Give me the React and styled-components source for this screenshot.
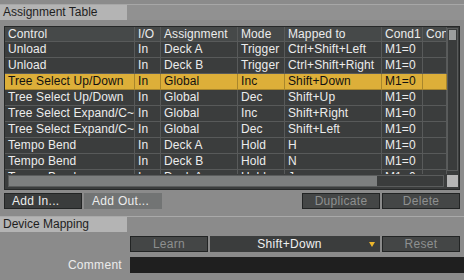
import React from 'react';
import styled, { createGlobalStyle } from 'styled-components';

const rows = [
  ['Unload', 'In', 'Deck A', 'Trigger', 'Ctrl+Shift+Left', 'M1=0', ''],
  ['Unload', 'In', 'Deck B', 'Trigger', 'Ctrl+Shift+Right', 'M1=0', ''],
  ['Tree Select Up/Down', 'In', 'Global', 'Inc', 'Shift+Down', 'M1=0', ''],
  ['Tree Select Up/Down', 'In', 'Global', 'Dec', 'Shift+Up', 'M1=0', ''],
  ['Tree Select Expand/C~', 'In', 'Global', 'Inc', 'Shift+Right', 'M1=0', ''],
  ['Tree Select Expand/C~', 'In', 'Global', 'Dec', 'Shift+Left', 'M1=0', ''],
  ['Tempo Bend', 'In', 'Deck A', 'Hold', 'H', 'M1=0', ''],
  ['Tempo Bend', 'In', 'Deck B', 'Hold', 'N', 'M1=0', ''],
  ['Tempo Bend', 'In', 'Deck A', 'Hold', 'J', 'M1=0', ''],
];

const headers = ['Control', 'I/O', 'Assignment', 'Mode', 'Mapped to', 'Cond1', 'Con'];

const App = () => {
  return (
    <>
      <GlobalStyle />
      <Panel>
        <TopStrip />
        <SectionHead>
          <Tab>Assignment Table</Tab>
          <TabRest />
        </SectionHead>

        <TableFrame>
          <TableBody>
            <Row $head>
              {headers.map((h) => (
                <Cell key={h}>{h}</Cell>
              ))}
            </Row>
            {rows.map((r, i) => (
              <Row key={i} $selected={i === 2}>
                {r.map((c, j) => (
                  <Cell key={j}>{c}</Cell>
                ))}
              </Row>
            ))}
          </TableBody>
          <VScroll>
            <VThumb />
          </VScroll>
          <HScroll>
            <HThumb />
          </HScroll>
          <Corner />
        </TableFrame>

        <ButtonRow>
          <Button $variant="dark" $left>Add In...</Button>
          <Button $variant="light" $left>Add Out...</Button>
          <Spacer />
          <Button>Duplicate</Button>
          <Button>Delete</Button>
        </ButtonRow>

        <Separator />
        <SectionHead>
          <Tab>Device Mapping</Tab>
        </SectionHead>

        <MappingGrid>
          <span />
          <ControlRow>
            <Button>Learn</Button>
            <Dropdown>
              <span>Shift+Down</span>
              <Arrow />
            </Dropdown>
            <Button>Reset</Button>
          </ControlRow>
          <Label>Comment</Label>
          <CommentInput />
        </MappingGrid>
      </Panel>
    </>
  );
};

const GlobalStyle = createGlobalStyle`
  body {
    margin: 0;
    background: #8b8b8b;
  }
`;

const Panel = styled.div`
  width: 464px;
  height: 280px;
  background: #8b8b8b;
  font-family: "Liberation Sans", Arial, sans-serif;
  font-size: 12px;
  overflow: hidden;
`;

const TopStrip = styled.div`
  height: 4px;
  border-bottom: 1px solid #a7a7a7;
`;

const SectionHead = styled.div`
  display: flex;
  height: 15px;
`;

const Tab = styled.div`
  width: 124px;
  padding-left: 3px;
  background: #b4b4b4;
  color: #1e1e1e;
  line-height: 15px;
`;

const TabRest = styled.div`
  flex: 1;
  background: #919191;
`;

const TableFrame = styled.div`
  box-sizing: border-box;
  margin: 6px 4px 0;
  width: 456px;
  height: 164px;
  border: 1px solid #262828;
  background: #3b3d3d;
  display: grid;
  grid-template-columns: 442px 12px;
  grid-template-rows: 147px 15px;
`;

const TableBody = styled.div`
  overflow: hidden;
`;

const Row = styled.div`
  display: grid;
  grid-template-columns: 130px 26px 77px 47px 97px 41px 24px;
  height: ${(p) => (p.$head ? '15px' : '16px')};
  box-sizing: border-box;
  border-bottom: 1px solid ${(p) => (p.$selected ? '#a8862c' : '#585a5a')};
  background: ${(p) => (p.$selected ? '#ddaf39' : p.$head ? '#464949' : '#3b3d3d')};
  color: ${(p) => (p.$selected ? '#111' : '#ececec')};

  & > div {
    border-right-color: ${(p) => (p.$selected ? '#a8862c' : '#585a5a')};
  }
`;

const Cell = styled.div`
  box-sizing: border-box;
  padding-left: 3px;
  border-right: 1px solid #585a5a;
  line-height: 15px;
  white-space: nowrap;
  overflow: hidden;
  letter-spacing: 0.1px;
`;

const VScroll = styled.div`
  box-sizing: border-box;
  margin: 1px 1px 3px 0;
  border: 1px solid #5a5c5c;
  background: #3a3c3c;
  padding: 1px;
`;

const VThumb = styled.div`
  height: 10px;
  background: #9c9e9e;
`;

const HScroll = styled.div`
  box-sizing: border-box;
  margin: 1px 3px 2px 3px;
  border: 1px solid #5a5c5c;
  background: #3a3c3c;
  display: flex;
`;

const HThumb = styled.div`
  width: 368px;
  background: #7d7f7f;
`;

const Corner = styled.div`
  margin: 1px 1px 2px 0;
  background: #b6b6b6;
`;

const ButtonRow = styled.div`
  display: flex;
  gap: 2px;
  padding: 0 4px;
  margin-top: 3px;
  height: 16px;
`;

const Spacer = styled.div`
  flex: 1;
`;

const Button = styled.div`
  box-sizing: border-box;
  width: 78px;
  height: 16px;
  border: 1px solid ${(p) => (p.$variant === 'light' ? '#727474' : '#222424')};
  background: ${(p) =>
    p.$variant === 'light' ? '#727474' : p.$variant === 'dark' ? '#3a3c3c' : '#444646'};
  color: ${(p) => (p.$variant ? '#ececec' : '#8e9090')};
  text-align: ${(p) => (p.$left ? 'left' : 'center')};
  padding-left: ${(p) => (p.$left ? '7px' : '0')};
  line-height: 14px;
  letter-spacing: 0.3px;
`;

const Separator = styled.div`
  margin-top: 7px;
  height: 1px;
  background: #a9a9a9;
`;

const MappingGrid = styled.div`
  display: grid;
  grid-template-columns: 130px 1fr;
  grid-template-rows: 16px 16px;
  row-gap: 5px;
  margin-top: 4px;
`;

const ControlRow = styled.div`
  display: flex;
  gap: 2px;
`;

const Dropdown = styled.div`
  box-sizing: border-box;
  width: 170px;
  height: 16px;
  background: #3b3d3d;
  color: #f0f0f0;
  display: flex;
  align-items: center;
  padding: 0 4px 0 0;
  letter-spacing: 0.3px;

  span {
    flex: 1;
    text-align: center;
  }
`;

const Arrow = styled.div`
  width: 0;
  height: 0;
  border-left: 3.5px solid transparent;
  border-right: 3.5px solid transparent;
  border-top: 5px solid #ecb52c;
  margin-right: 1px;
`;

const Label = styled.div`
  text-align: right;
  padding-right: 8px;
  color: #ececec;
  line-height: 16px;
  letter-spacing: 0.3px;
`;

const CommentInput = styled.div`
  background: #1f1f1f;
`;

export default App;
